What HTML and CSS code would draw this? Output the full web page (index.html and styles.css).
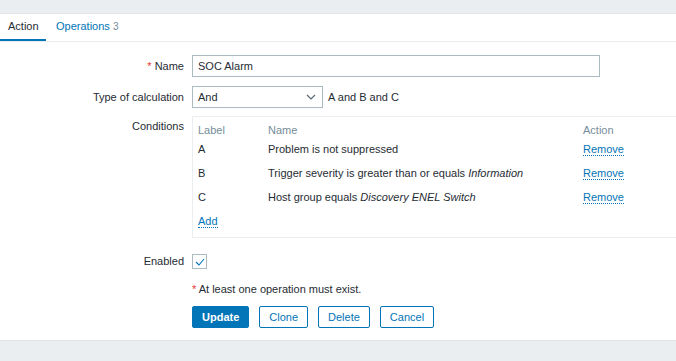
FILE: index.html
```html
<!DOCTYPE html>
<html lang="en">
<head>
    <meta charset="UTF-8">
    <title>Action</title>
    <link rel="stylesheet" href="styles.css">
</head>
<body>
    <div class="page">
        <div class="panel">
            <ul class="tabs">
                <li class="tab active">Action</li>
                <li class="tab">Operations <span class="count">3</span></li>
            </ul>

            <div class="form">
                <div class="row row-name">
                    <label class="label"><span class="req">*</span> Name</label>
                    <div class="field">
                        <input type="text" class="input name-input" value="SOC Alarm">
                    </div>
                </div>

                <div class="row row-calc">
                    <label class="label">Type of calculation</label>
                    <div class="field field-inline">
                        <div class="select">
                            <span>And</span>
                            <svg width="10" height="6" viewBox="0 0 10 6"><path d="M1 1 L5 5 L9 1" fill="none" stroke="#5a6a74" stroke-width="1.2"/></svg>
                        </div>
                        <span class="formula">A and B and C</span>
                    </div>
                </div>

                <div class="row row-cond">
                    <label class="label">Conditions</label>
                    <div class="field">
                        <div class="cond-box">
                            <table class="cond-table">
                                <thead>
                                    <tr>
                                        <th class="col-label">Label</th>
                                        <th class="col-name">Name</th>
                                        <th class="col-action">Action</th>
                                    </tr>
                                </thead>
                                <tbody>
                                    <tr>
                                        <td>A</td>
                                        <td>Problem is not suppressed</td>
                                        <td><a class="link">Remove</a></td>
                                    </tr>
                                    <tr>
                                        <td>B</td>
                                        <td>Trigger severity is greater than or equals <em>Information</em></td>
                                        <td><a class="link">Remove</a></td>
                                    </tr>
                                    <tr>
                                        <td>C</td>
                                        <td>Host group equals <em>Discovery ENEL Switch</em></td>
                                        <td><a class="link">Remove</a></td>
                                    </tr>
                                    <tr>
                                        <td colspan="3"><a class="link">Add</a></td>
                                    </tr>
                                </tbody>
                            </table>
                        </div>
                    </div>
                </div>

                <div class="row row-enabled">
                    <label class="label">Enabled</label>
                    <div class="field">
                        <span class="checkbox">
                            <svg width="10" height="8" viewBox="0 0 10 8"><path d="M1 4 L4 7 L9 1" fill="none" stroke="#0275b8" stroke-width="1.1"/></svg>
                        </span>
                    </div>
                </div>

                <div class="row row-note">
                    <span class="label"></span>
                    <div class="field note"><span class="req">*</span> At least one operation must exist.</div>
                </div>

                <div class="row row-buttons">
                    <span class="label"></span>
                    <div class="field buttons">
                        <button class="btn btn-primary">Update</button>
                        <button class="btn">Clone</button>
                        <button class="btn">Delete</button>
                        <button class="btn">Cancel</button>
                    </div>
                </div>
            </div>
        </div>
    </div>
</body>
</html>
```

FILE: styles.css
```css
/* Base */
* {
    margin: 0;
    padding: 0;
    box-sizing: border-box;
}

body {
    font-family: "Liberation Sans", Arial, sans-serif;
    font-size: 11px;
    color: #1f2c33;
    background: #ebeef0;
}

.page {
    padding-top: 13px;
}

/* Panel */
.panel {
    background: #fff;
    border-top: 1px solid #dfe4e7;
    border-bottom: 1px solid #dfe4e7;
    height: 328px;
}

/* Tabs */
.tabs {
    list-style: none;
    display: flex;
    border-bottom: 1px solid #ebeef0;
    height: 28px;
}

.tab {
    padding: 6px 8px 0 10px;
    color: #0275b8;
    height: 27px;
}

.tab.active {
    color: #1f2c33;
    border-bottom: 2px solid #0275b8;
    padding: 6px 0 0 8px;
    width: 46px;
}

.tab .count {
    color: #768d99;
    font-size: 10px;
}

/* Form */
.form {
    padding-top: 13px;
}

.row {
    display: flex;
    align-items: flex-start;
}

.label {
    width: 184px;
    text-align: right;
    line-height: 22px;
    flex-shrink: 0;
}

.req {
    color: #e33734;
}

.field {
    margin-left: 8px;
    flex: 1;
}

.field-inline {
    display: flex;
    align-items: center;
    gap: 5px;
}

.row-name {
    margin-bottom: 9px;
}

.row-calc {
    margin-bottom: 8px;
}

.input {
    font-family: inherit;
    font-size: 11px;
    color: #1f2c33;
    border: 1px solid #acbbc2;
    height: 22px;
    padding: 0 5px;
    outline: none;
}

.name-input {
    width: 408px;
}

.select {
    width: 131px;
    height: 22px;
    border: 1px solid #acbbc2;
    display: flex;
    align-items: center;
    justify-content: space-between;
    padding: 0 6px 0 5px;
}

.formula {
    line-height: 22px;
}

/* Conditions */
.row-cond .label {
    line-height: 20px;
}

.cond-box {
    border-top: 1px solid #ebeef0;
    border-bottom: 1px solid #ebeef0;
    border-left: 1px solid #ebeef0;
    height: 122px;
    padding: 5px 5px 0 5px;
}

.cond-table {
    border-collapse: collapse;
    width: 100%;
}

.cond-table th {
    font-weight: normal;
    color: #768d99;
    text-align: left;
    height: 15px;
    vertical-align: middle;
}

.cond-table td {
    height: 24px;
    vertical-align: middle;
}

.col-label {
    width: 70px;
}

.col-action {
    width: 88px;
}

.link {
    color: #0275b8;
    border-bottom: 1px dotted #0275b8;
    text-decoration: none;
}

/* Enabled */
.row-enabled {
    margin-top: 16px;
    margin-bottom: 13px;
}

.row-enabled .label {
    line-height: 15px;
}

.checkbox {
    display: flex;
    align-items: center;
    justify-content: center;
    width: 15px;
    height: 15px;
    border: 1px solid #acbbc2;
}

.note {
    line-height: 14px;
}

.row-note {
    margin-bottom: 10px;
}

/* Buttons */
.buttons {
    display: flex;
    gap: 10px;
}

.btn {
    font-family: inherit;
    font-size: 11px;
    height: 22px;
    padding: 0 9px;
    border: 1px solid #0275b8;
    background: #fff;
    color: #0275b8;
    border-radius: 2px;
    cursor: pointer;
}

.btn-primary {
    background: #0275b8;
    color: #fff;
    font-weight: bold;
    padding: 0 9px;
}
```
